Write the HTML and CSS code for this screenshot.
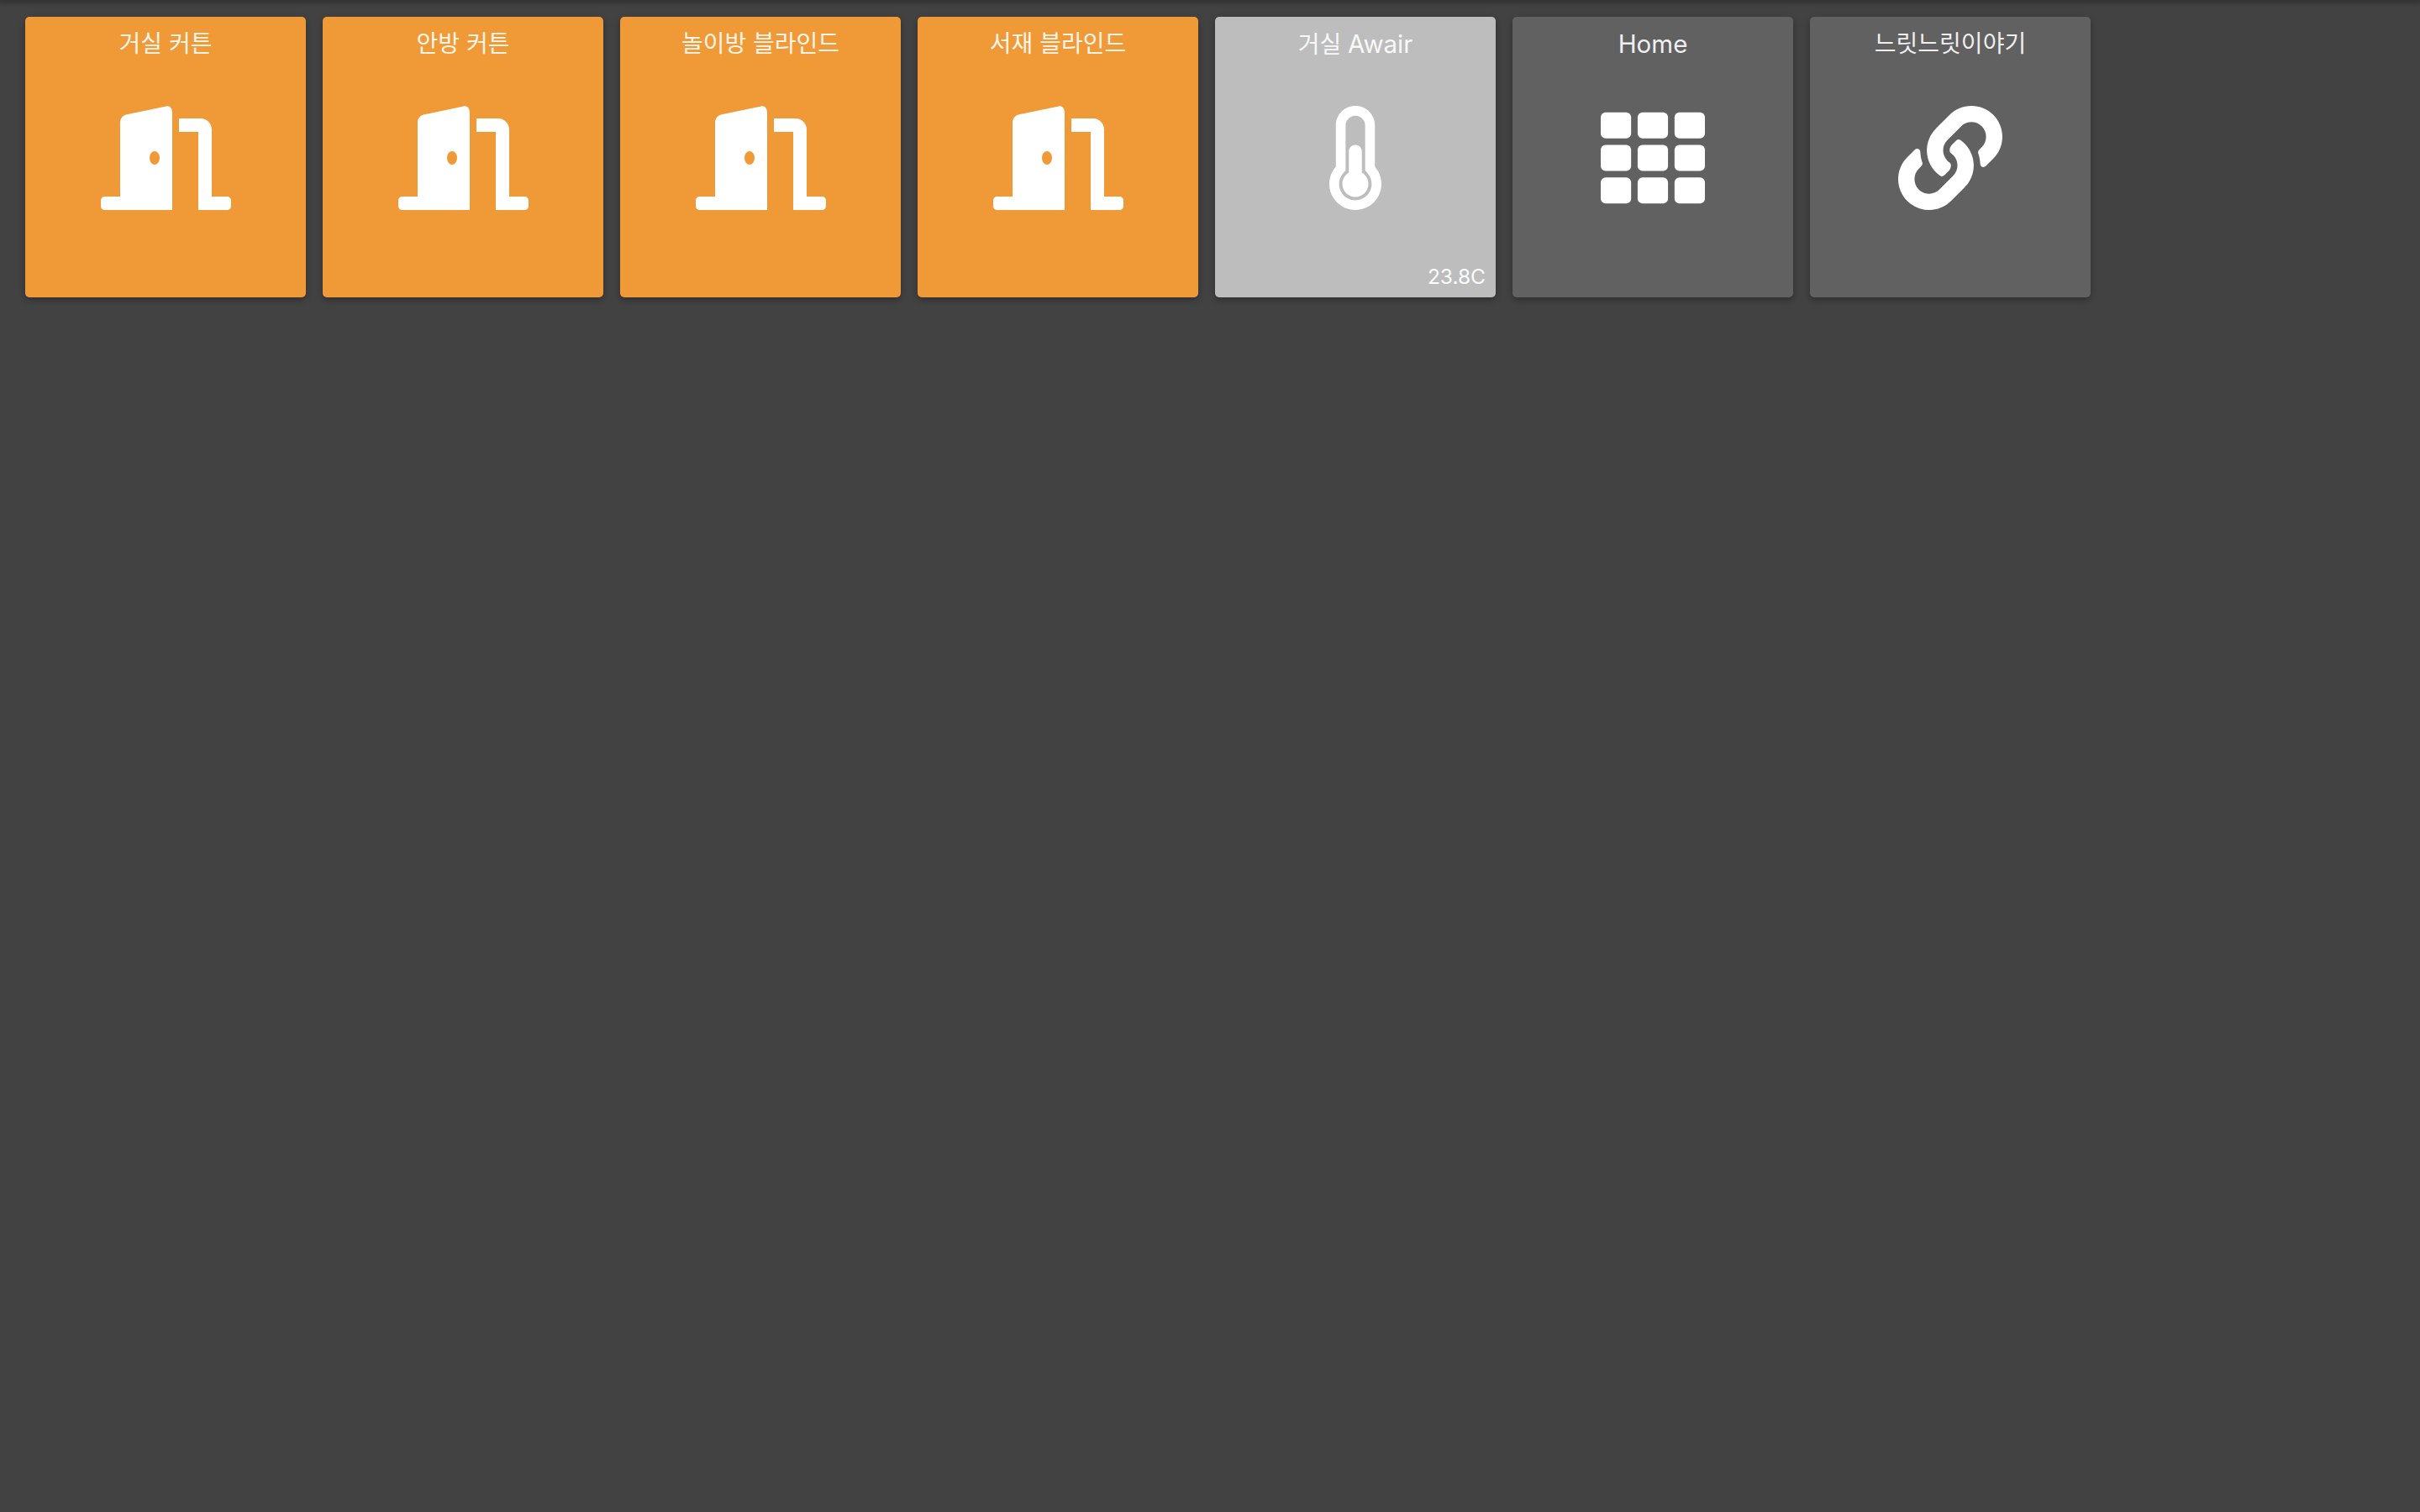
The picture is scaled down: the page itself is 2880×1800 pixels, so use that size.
FILE: index.html
```html
<!DOCTYPE html>
<html lang="ko">
<head>
  <meta charset="UTF-8">
  <title>Dashboard</title>
  <link rel="stylesheet" href="styles.css">
</head>
<body>
  <div class="topbar"></div>

  <div class="tiles">
    <div class="tile tile-on">
      <div class="tile-title">거실 커튼</div>
      <div class="tile-icon">
        <svg viewBox="0 0 155 124"><path fill-rule="evenodd" d="M5 108H23V20C23 15 26 11.500 31 10.300L78 .4C82 -.5 85 3 85 8V124H5C2 124 0 122 0 119V113C0 110 2 108 5 108ZM58 62A6 8 0 0 0 70 62A6 8 0 0 0 58 62Z"/><path d="M93 15H119C126 15 132 21 132 28V108H150C153 108 155 110 155 113V119C155 122 153 124 150 124H116V31H93Z"/></svg>
      </div>
    </div>
    <div class="tile tile-on">
      <div class="tile-title">안방 커튼</div>
      <div class="tile-icon">
        <svg viewBox="0 0 155 124"><path fill-rule="evenodd" d="M5 108H23V20C23 15 26 11.500 31 10.300L78 .4C82 -.5 85 3 85 8V124H5C2 124 0 122 0 119V113C0 110 2 108 5 108ZM58 62A6 8 0 0 0 70 62A6 8 0 0 0 58 62Z"/><path d="M93 15H119C126 15 132 21 132 28V108H150C153 108 155 110 155 113V119C155 122 153 124 150 124H116V31H93Z"/></svg>
      </div>
    </div>
    <div class="tile tile-on">
      <div class="tile-title">놀이방 블라인드</div>
      <div class="tile-icon">
        <svg viewBox="0 0 155 124"><path fill-rule="evenodd" d="M5 108H23V20C23 15 26 11.500 31 10.300L78 .4C82 -.5 85 3 85 8V124H5C2 124 0 122 0 119V113C0 110 2 108 5 108ZM58 62A6 8 0 0 0 70 62A6 8 0 0 0 58 62Z"/><path d="M93 15H119C126 15 132 21 132 28V108H150C153 108 155 110 155 113V119C155 122 153 124 150 124H116V31H93Z"/></svg>
      </div>
    </div>
    <div class="tile tile-on">
      <div class="tile-title">서재 블라인드</div>
      <div class="tile-icon">
        <svg viewBox="0 0 155 124"><path fill-rule="evenodd" d="M5 108H23V20C23 15 26 11.500 31 10.300L78 .4C82 -.5 85 3 85 8V124H5C2 124 0 122 0 119V113C0 110 2 108 5 108ZM58 62A6 8 0 0 0 70 62A6 8 0 0 0 58 62Z"/><path d="M93 15H119C126 15 132 21 132 28V108H150C153 108 155 110 155 113V119C155 122 153 124 150 124H116V31H93Z"/></svg>
      </div>
    </div>

    <div class="tile tile-sensor">
      <div class="tile-title">거실 <span class="latin">Awair</span></div>
      <div class="tile-icon">
        <svg viewBox="0 0 256 512"><path d="M192 384c0 35.346-28.654 64-64 64s-64-28.654-64-64c0-23.685 12.876-44.349 32-55.417V224c0-17.673 14.327-32 32-32s32 14.327 32 32v104.583c19.124 11.068 32 31.732 32 55.417zm32-84.653c19.912 22.563 32 52.194 32 84.653 0 70.696-57.303 128-128 128-.299 0-.609-.001-.909-.003C56.789 511.509-.357 453.636.002 383.333.166 351.135 12.225 321.755 32 299.347V96c0-53.019 42.981-96 96-96s96 42.981 96 96v203.347zM208 384c0-34.339-19.37-52.19-32-66.502V96c0-26.467-21.533-48-48-48-26.467 0-48 21.533-48 48v221.498c-12.732 14.428-31.825 32.1-31.999 66.08-.224 43.876 35.563 80.116 79.423 80.42L128 464c44.112 0 80-35.888 80-80z"/></svg>
      </div>
      <div class="tile-value">23.8C</div>
    </div>

    <div class="tile">
      <div class="tile-title"><span class="latin">Home</span></div>
      <div class="tile-icon">
        <svg viewBox="0 0 512 512">
          <rect y="32" width="149.33" height="128" rx="24"/>
          <rect x="181.33" y="32" width="149.33" height="128" rx="24"/>
          <rect x="362.67" y="32" width="149.33" height="128" rx="24"/>
          <rect y="192" width="149.33" height="128" rx="24"/>
          <rect x="181.33" y="192" width="149.33" height="128" rx="24"/>
          <rect x="362.67" y="192" width="149.33" height="128" rx="24"/>
          <rect y="352" width="149.33" height="128" rx="24"/>
          <rect x="181.33" y="352" width="149.33" height="128" rx="24"/>
          <rect x="362.67" y="352" width="149.33" height="128" rx="24"/>
        </svg>
      </div>
    </div>

    <div class="tile">
      <div class="tile-title">느릿느릿이야기</div>
      <div class="tile-icon">
        <svg viewBox="0 0 512 512"><path d="M326.612 185.391c59.747 59.809 58.927 155.698.36 214.59-.11.12-.24.25-.36.37l-67.2 67.2c-59.27 59.27-155.699 59.262-214.96 0-59.27-59.26-59.27-155.7 0-214.96l37.106-37.106c9.84-9.84 26.786-3.3 27.294 10.606.648 17.722 3.826 35.527 9.69 52.721 1.986 5.822.567 12.262-3.783 16.612l-13.087 13.087c-28.026 28.026-28.905 73.66-1.155 101.96 28.024 28.579 74.086 28.749 102.325.51l67.2-67.19c28.191-28.191 28.073-73.757 0-101.83-3.701-3.694-7.429-6.564-10.341-8.569a16.037 16.037 0 0 1-6.947-12.606c-.396-10.567 3.348-21.456 11.698-29.806l21.054-21.055c5.521-5.521 14.182-6.199 20.584-1.731a152.482 152.482 0 0 1 20.522 17.197zM467.547 44.449c-59.261-59.262-155.69-59.27-214.96 0l-67.2 67.2c-.12.12-.25.25-.36.37-58.566 58.892-59.387 154.781.36 214.59a152.454 152.454 0 0 0 20.521 17.196c6.402 4.468 15.064 3.789 20.584-1.731l21.054-21.055c8.35-8.35 12.094-19.239 11.698-29.806a16.037 16.037 0 0 0-6.947-12.606c-2.912-2.005-6.64-4.875-10.341-8.569-28.073-28.073-28.191-73.639 0-101.83l67.2-67.19c28.239-28.239 74.3-28.069 102.325.51 27.75 28.3 26.872 73.934-1.155 101.96l-13.087 13.087c-4.35 4.35-5.769 10.79-3.783 16.612 5.864 17.194 9.042 34.999 9.69 52.721.509 13.906 17.454 20.446 27.294 10.606l37.106-37.106c59.271-59.259 59.271-155.699.001-214.959z"/></svg>
      </div>
    </div>
  </div>
</body>
</html>
```

FILE: styles.css
```css
html,
body {
  height: 100%;
}

body {
  margin: 0;
  background: #424242;
  color: #fff;
  font-family: Inter, "Noto Sans CJK KR", sans-serif;
  overflow: hidden;
}

/* Only the shadow of the app bar shows at the top edge */
.topbar {
  height: 0;
  box-shadow: 0 0 6px 2px rgba(0, 0, 0, 0.45);
}

.tiles {
  display: flex;
  gap: 20px;
  padding: 20px 30px;
}

.tile {
  display: flex;
  flex-direction: column;
  align-items: center;
  box-sizing: border-box;
  width: 334px;
  height: 334px;
  background: #616161;
  border-radius: 5px;
  box-shadow: 0 3px 7px rgba(0, 0, 0, 0.3);
}

.tile-on {
  background: #f09a37;
}

.tile-sensor {
  background: #bdbdbd;
}

.tile-title {
  height: 106px;
  padding-top: 13px;
  box-sizing: border-box;
  font-size: 28px;
  line-height: 38px;
  opacity: 0.9;
}

.latin {
  font-size: 29.5px;
}

.tile-icon {
  display: flex;
  justify-content: center;
  height: 124px;
}

.tile-icon svg {
  display: block;
  height: 124px;
  fill: #fff;
}

.tile-value {
  align-self: flex-end;
  margin-top: 64px;
  padding-right: 12px;
  font-size: 24.5px;
  line-height: 30px;
}
```
